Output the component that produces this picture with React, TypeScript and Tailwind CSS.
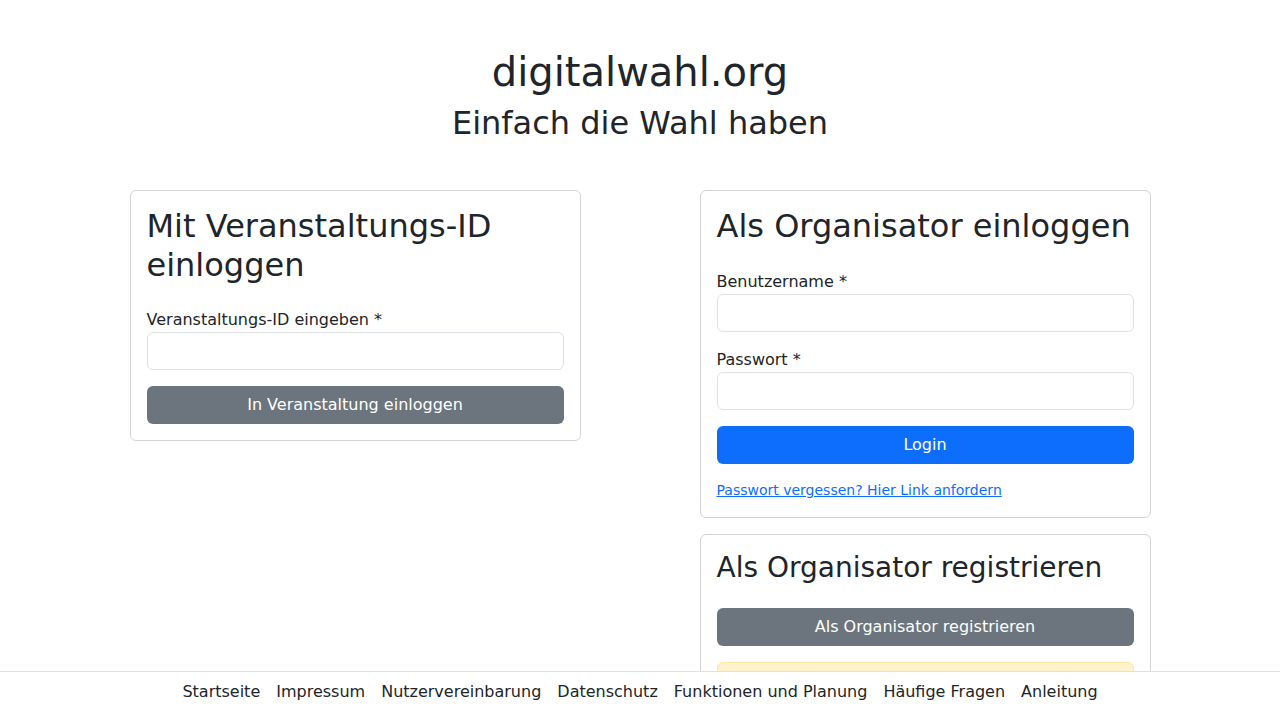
import React from "react";

const footerLinks = [
  "Startseite",
  "Impressum",
  "Nutzervereinbarung",
  "Datenschutz",
  "Funktionen und Planung",
  "Häufige Fragen",
  "Anleitung",
];

function Card({ children, className = "" }: { children: React.ReactNode; className?: string }) {
  return (
    <div className={`rounded-md border border-[#d3d4d5] bg-white p-4 ${className}`}>{children}</div>
  );
}

function Field({ label, type = "text", className = "" }: { label: string; type?: string; className?: string }) {
  return (
    <div className={className}>
      <label className="block text-base leading-6">{label}</label>
      <input
        type={type}
        className="block h-[38px] w-full rounded-md border border-[#dee2e6] bg-white px-3 outline-none"
      />
    </div>
  );
}

export default function App() {
  return (
    <div className="min-h-screen bg-white font-['DejaVu_Sans',sans-serif] text-[#212529]">
      <header className="pt-12 text-center">
        <h1 className="mb-2 text-[40px] font-normal leading-[1.2]">digitalwahl.org</h1>
        <h2 className="mb-12 text-[32px] font-normal leading-[1.2]">Einfach die Wahl haben</h2>
      </header>

      <main className="mx-auto flex w-[1021px] items-start justify-between pb-24">
        <div className="w-[451px]">
          <Card>
            <h2 className="mb-6 text-[32px] font-normal leading-[1.2]">Mit Veranstaltungs-ID einloggen</h2>
            <Field label="Veranstaltungs-ID eingeben *" />
            <button className="mt-4 h-[38px] w-full rounded-md bg-[#6c757d] text-base text-white">
              In Veranstaltung einloggen
            </button>
          </Card>
        </div>

        <div className="flex w-[451px] flex-col gap-4">
          <Card>
            <h2 className="mb-6 text-[32px] font-normal leading-[1.2]">Als Organisator einloggen</h2>
            <Field label="Benutzername *" className="mb-4" />
            <Field label="Passwort *" type="password" />
            <button className="mt-4 h-[38px] w-full rounded-md bg-[#0d6efd] text-base text-white">Login</button>
            <a href="#" className="mt-4 block text-sm leading-[21px] text-[#0d6efd] underline">
              Passwort vergessen? Hier Link anfordern
            </a>
          </Card>

          <Card>
            <h3 className="mb-6 text-[28px] font-normal leading-[1.2]">Als Organisator registrieren</h3>
            <button className="h-[38px] w-full rounded-md bg-[#6c757d] text-base text-white">
              Als Organisator registrieren
            </button>
            <div className="mt-4 rounded-md border border-[#ffe69c] bg-[#fff3cd] p-4 text-[#664d03]">
              Die Registrierung ist derzeit kostenlos.
            </div>
          </Card>
        </div>
      </main>

      <footer className="fixed inset-x-0 bottom-0 flex h-[49px] justify-center gap-4 border-t border-[#dee2e6] bg-white pt-2 text-base leading-6">
        {footerLinks.map((link) => (
          <a key={link} href="#" className="text-[#212529]">
            {link}
          </a>
        ))}
      </footer>
    </div>
  );
}
